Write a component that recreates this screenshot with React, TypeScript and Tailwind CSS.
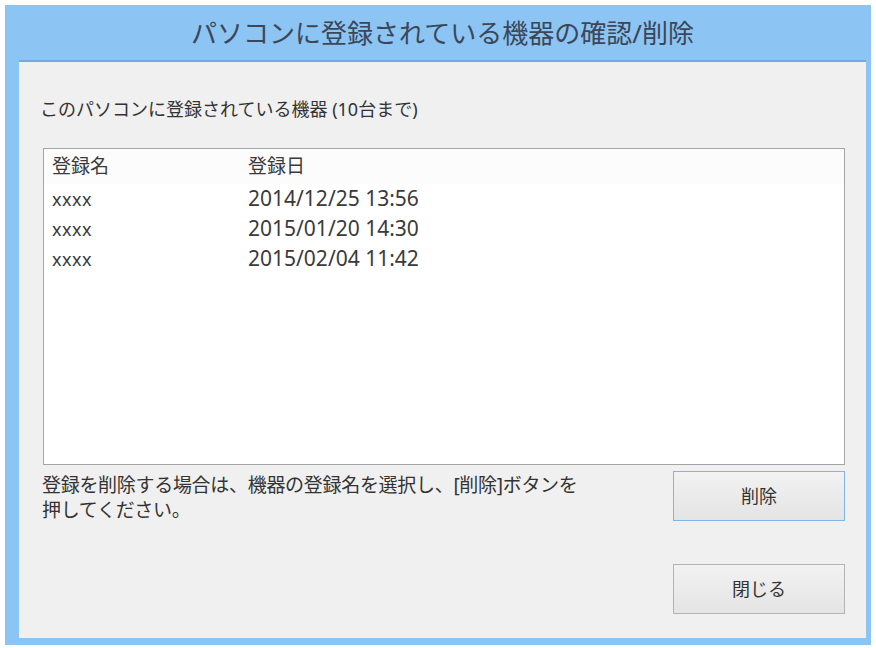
const devices = [
  { name: "xxxx", date: "2014/12/25 13:56" },
  { name: "xxxx", date: "2015/01/20 14:30" },
  { name: "xxxx", date: "2015/02/04 11:42" },
];

function DialogButton({ label, focused }: { label: string; focused?: boolean }) {
  return (
    <button
      className={
        "h-[50px] w-[172px] border bg-gradient-to-b from-[#f2f2f2] to-[#e4e4e4] text-[18px] text-[#333] " +
        (focused ? "border-[#7fb6ea]" : "border-[#b4b4b4]")
      }
    >
      {label}
    </button>
  );
}

export default function App() {
  return (
    <div className="h-[648px] w-[876px] bg-white pl-[5px] pt-[5px] font-['Noto_Sans','Noto_Sans_CJK_JP',sans-serif]">
      <div className="flex h-[640px] w-[866px] flex-col bg-[#8cc4f4] pb-[7px] pl-[14px] pr-[5px]">
        <header className="flex h-[55px] shrink-0 items-center justify-center">
          <h1 className="text-[26px] leading-none text-[#3b4758]">
            パソコンに登録されている機器の確認/削除
          </h1>
        </header>

        <main className="flex flex-1 flex-col border-t-2 border-[#76a8dc] bg-[#f0f0f0] pl-[21px] pr-[21px] pt-[35px]">
          <p className="text-[18px] leading-[24px] text-[#333]">
            このパソコンに登録されている機器 (10台まで)
          </p>

          <div className="ml-[3px] mt-[27px] h-[317px] border border-[#a4a4a4] bg-white">
            <div className="flex h-[35px] items-center bg-[#fcfcfc] pl-[8px] text-[19px] text-[#3a3a3a]">
              <span className="w-[196px]">登録名</span>
              <span>登録日</span>
            </div>
            {devices.map((d, i) => (
              <div key={i} className="flex h-[30px] items-center pl-[8px] text-[#3a3a3a]">
                <span className="w-[196px] text-[18px] tracking-[0.5px]">{d.name}</span>
                <span className="text-[21px]">{d.date}</span>
              </div>
            ))}
          </div>

          <div className="flex justify-between">
            <p className="ml-[2px] mt-[8px] text-[19px] leading-[25px] tracking-[-0.3px] text-[#333]">
              登録を削除する場合は、機器の登録名を選択し、[削除]ボタンを
              <br />
              押してください。
            </p>
            <div className="mt-[6px] flex flex-col gap-[43px]">
              <DialogButton label="削除" focused />
              <DialogButton label="閉じる" />
            </div>
          </div>
        </main>
      </div>
    </div>
  );
}
